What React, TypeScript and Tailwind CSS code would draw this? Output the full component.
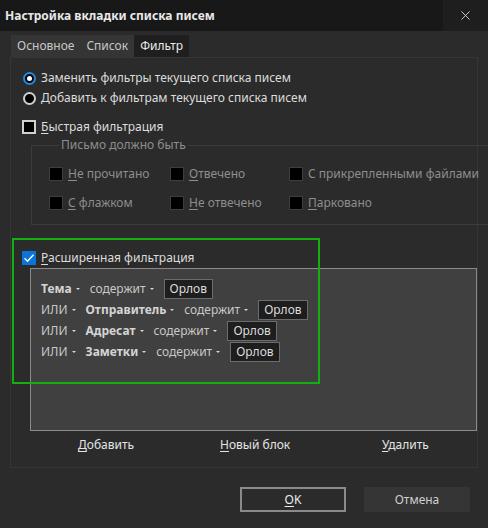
import React from "react";
import { X } from "lucide-react";

const font = { fontFamily: '"Noto Sans", "Open Sans", sans-serif' };

function U({ c, rest }: { c: string; rest: string }) {
  return (
    <span>
      <span className="underline underline-offset-2">{c}</span>
      {rest}
    </span>
  );
}

function Radio({ checked, label }: { checked?: boolean; label: string }) {
  return (
    <div className="flex items-center gap-[5px] h-[20px]">
      {checked ? (
        <span className="w-[13px] h-[13px] rounded-full border-2 border-[#1a8ce8] bg-black flex items-center justify-center">
          <span className="w-[5px] h-[5px] rounded-full bg-white" />
        </span>
      ) : (
        <span className="w-[13px] h-[13px] rounded-full border-2 border-[#cfcfcf] bg-black" />
      )}
      <span className="text-[#dcdcdc]">{label}</span>
    </div>
  );
}

function DisabledCheck({ children }: { children: React.ReactNode }) {
  return (
    <div className="flex items-center gap-[5px] h-[20px] text-[#8e8e8e] whitespace-nowrap">
      <span className="w-[14px] h-[14px] shrink-0 bg-black border border-[#3e3e3e]" />
      {children}
    </div>
  );
}

function Arrow() {
  return (
    <svg width="4" height="2" viewBox="0 0 4 2" className="shrink-0">
      <path d="M0 0h4L2 2z" fill="#d8d8d8" />
    </svg>
  );
}

function Drop({ text, bold }: { text: string; bold?: boolean }) {
  return (
    <div className="flex items-center gap-[4px]">
      <span className={bold ? "font-bold text-[#d4d4d4]" : "text-[#c8c8c8]"}>{text}</span>
      <Arrow />
    </div>
  );
}

function Value() {
  return (
    <span className="h-[20px] px-[5px] flex items-center bg-[#1e1e1e] border border-[#6c6c6c] text-[#dcdcdc]">
      Орлов
    </span>
  );
}

function Rule({ or, field }: { or?: boolean; field: string }) {
  return (
    <div className="flex items-center gap-[10px] h-[21px] whitespace-nowrap">
      {or && <Drop text="ИЛИ" />}
      <Drop text={field} bold />
      <Drop text="содержит" />
      <Value />
    </div>
  );
}

export default function App() {
  return (
    <div className="w-[488px] h-[528px] bg-[#2b2b2b] relative overflow-hidden text-[12px] leading-[16px]" style={font}>
      {/* Title bar */}
      <div className="h-[31px] bg-[#181818] flex items-center justify-between">
        <span className="pl-[5px] font-bold text-[#e8e8e8]">Настройка вкладки списка писем</span>
        <div className="w-[45px] h-full bg-[#1e1e1e] flex items-center justify-center">
          <X size={15} strokeWidth={1.4} color="#e0e0e0" />
        </div>
      </div>

      {/* Tabs */}
      <div className="flex ml-[11px] mt-[4px] h-[22px]">
        <span className="px-[6px] flex items-center bg-[#353535] text-[#c8c8c8]">Основное</span>
        <span className="px-[6px] flex items-center bg-[#353535] text-[#c8c8c8]">Список</span>
        <span className="px-[6px] flex items-center bg-[#1f1f1f] text-[#ececec]">Фильтр</span>
      </div>

      {/* Panel */}
      <div className="mx-[10px] h-[411px] border border-[#363636] flex flex-col">
        <div className="pl-[12px] pt-[10px] flex flex-col">
          <Radio checked label="Заменить фильтры текущего списка писем" />
          <Radio label="Добавить к фильтрам текущего списка писем" />
        </div>

        <div className="pl-[11px] mt-[9px] flex items-center gap-[5px] h-[20px]">
          <span className="w-[14px] h-[14px] bg-black border-2 border-[#d0d0d0]" />
          <span className="text-[#dcdcdc]">
            <U c="Б" rest="ыстрая фильтрация" />
          </span>
        </div>

        <fieldset className="ml-[20px] w-[446px] border border-[#3c3c3c] px-[17px] pt-[11px] pb-[11px]">
          <legend className="ml-[10px] px-[2px] text-[#8e8e8e] leading-[16px]">Письмо должно быть</legend>
          <div className="grid grid-cols-[121px_119px_1fr] gap-y-[9px]">
            <DisabledCheck>
              <U c="Н" rest="е прочитано" />
            </DisabledCheck>
            <DisabledCheck>
              <U c="О" rest="твечено" />
            </DisabledCheck>
            <DisabledCheck>С прикрепленными файлами</DisabledCheck>
            <DisabledCheck>
              <U c="С" rest=" флажком" />
            </DisabledCheck>
            <DisabledCheck>
              <U c="Н" rest="е отвечено" />
            </DisabledCheck>
            <DisabledCheck>
              <U c="П" rest="арковано" />
            </DisabledCheck>
          </div>
        </fieldset>

        <div className="pl-[11px] mt-[23px] flex items-center gap-[5px] h-[20px]">
          <span className="w-[14px] h-[14px] bg-[#0a74d8] flex items-center justify-center">
            <svg width="12" height="12" viewBox="0 0 12 12">
              <path d="M1.5 6.2l3 3 6-6.5" stroke="white" strokeWidth="1.3" fill="none" />
            </svg>
          </span>
          <span className="text-[#dcdcdc]">
            <U c="Р" rest="асширенная фильтрация" />
          </span>
        </div>

        <div className="ml-[19px] w-[447px] h-[163px] bg-[#404040] border border-[#8a8a8a] pl-[10px] pt-[9px] flex flex-col">
          <Rule field="Тема" />
          <Rule or field="Отправитель" />
          <Rule or field="Адресат" />
          <Rule or field="Заметки" />
        </div>

        <div className="mt-[4px] h-[20px] flex items-center text-[#e4e4e4]">
          <span className="ml-[67px] w-[142px]">
            <U c="Д" rest="обавить" />
          </span>
          <span className="w-[162px]">
            <U c="Н" rest="овый блок" />
          </span>
          <span>
            <U c="У" rest="далить" />
          </span>
        </div>
      </div>

      {/* Dialog buttons */}
      <div className="flex mt-[19px] ml-[240px] gap-[18px]">
        <div className="w-[106px] h-[25px] border-2 border-[#8a8a8a] flex items-center justify-center text-[#ececec]">
          <U c="O" rest="K" />
        </div>
        <div className="w-[106px] h-[25px] bg-[#353535] flex items-center justify-center text-[#cfcfcf]">Отмена</div>
      </div>

      {/* Green highlight overlay */}
      <div className="absolute left-[12px] top-[238px] w-[308px] h-[146px] border-2 border-[#10b010] pointer-events-none" />
    </div>
  );
}
